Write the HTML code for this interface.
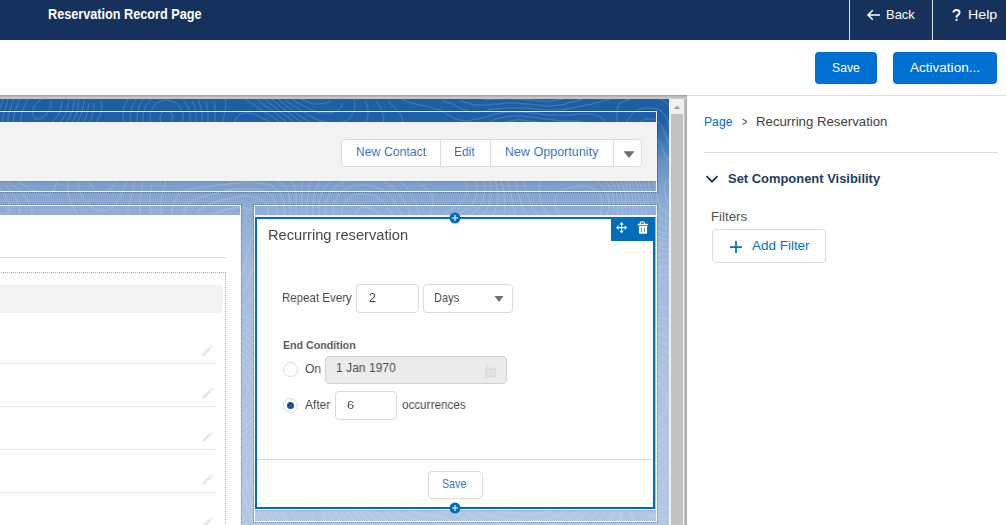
<!DOCTYPE html>
<html><head><meta charset="utf-8">
<style>
*{box-sizing:border-box;margin:0;padding:0}
html,body{width:1006px;height:525px;overflow:hidden;background:#fff;font-family:"Liberation Sans",sans-serif;color:#3e3e3c}
.a{position:absolute;white-space:nowrap}
.t{position:absolute;white-space:nowrap;line-height:1;transform-origin:0 0}
.g{will-change:transform}
#hdr{left:0;top:0;width:1006px;height:40px;background:#16325c}
.sep{position:absolute;top:0;width:1px;height:40px;background:#d8dde6}
#canvas{left:0;top:95px;width:687px;height:430px;overflow:hidden;background:#bdbdbd}
#bg{left:0;top:4px;width:669px;height:426px;background:linear-gradient(to bottom,#1d5ea4 0px,#1f60a6 22px,#3a73b4 40px,#6590c4 62px,#7d9fcc 85px,#90add5 110px,#a3bbdc 170px,#adc3e0 280px,#b2c7e3 426px)}
.dot{position:absolute;border:1px dotted rgba(22,45,85,.4)}
.wl{position:absolute;border:1px solid rgba(255,255,255,.88)}
.btn{position:absolute;background:#0070d2;border-radius:4px;color:#fff;font-size:13px;text-align:center}
</style></head><body>
<!-- header -->
<div id="hdr" class="a">
  <div class="sep" style="left:849px"></div>
  <div class="sep" style="left:932px"></div>
  <svg class="a" style="left:951px;top:9px" width="11" height="12" viewBox="0 0 11 12"><path d="M2.3 3.6C2.3 2 3.6 1 5.4 1 7.3 1 8.6 2.1 8.6 3.6c0 1.3-.8 1.9-1.7 2.5-.9.6-1.4 1-1.4 2.1v.4" stroke="#fff" stroke-width="1.9" fill="none"/><circle cx="5.5" cy="10.9" r="1.1" fill="#fff"/></svg>
  <svg class="a" style="left:865px;top:8px" width="16" height="14" viewBox="0 0 16 14"><path d="M15 7H3M7.8 2.2L3 7l4.8 4.8" stroke="#fff" stroke-width="1.5" fill="none"/></svg>
</div>
<!-- toolbar -->
<div class="btn" style="left:815px;top:52px;width:62px;height:32px;line-height:32px"></div>
<div class="btn" style="left:893px;top:52px;width:104px;height:32px;line-height:32px;font-size:13.5px"></div>
<div class="a" style="left:687px;top:95px;width:319px;height:1px;background:#dddbda"></div>

<!-- canvas -->
<div class="a" style="left:0;top:95px;width:687px;height:430px;background:#bdbdbd"></div>
<div class="a" style="left:684px;top:95px;width:3px;height:430px;background:linear-gradient(to right,#c6c6c6,#b4b4b4 50%,#a6a6a6)"></div>
<div class="a" style="left:0;top:95px;width:687px;height:4px;background:linear-gradient(#9c9c9c,#b9b9b9 40%,#cdcdcd)"></div>
<div class="a" style="left:669px;top:99px;width:15px;height:426px;background:#f1f1f1"></div>
<div class="a" style="left:671px;top:114px;width:12px;height:411px;background:#c1c1c1"></div>
<svg class="a" style="left:671px;top:103px" width="12" height="8" viewBox="0 0 12 8"><path d="M2.6 6h6.8L6 2.6z" fill="#a3a3a3"/></svg>
<div id="cv" class="a" style="left:0;top:0;width:669px;height:525px;overflow:hidden">
  <div id="bg" class="a" style="top:99px"></div>
  <!--CONTOUR--><svg class="a" style="left:0;top:99px" width="700" height="440" viewBox="0 0 700 440"><path fill="none" stroke="rgba(255,255,255,.27)" stroke-width="0.75" d="M41 0 38 3 35 6 33 10 33 16 35 20 40 20 44 18 46 16 49 12 51 8 51 2 M586 128 590 127 594 124 596 122 599 118 601 114 602 110 602 104 602 100 600 96 597 92 594 90 590 88 584 87 578 87 572 88 568 89 564 90 560 93 557 96 555 100 555 106 556 110 558 114 562 118 564 120 568 124 572 126 576 127 580 128 586 128 M60 342 63 340 65 336 64 331 62 328 58 326 52 324 46 326 43 328 41 332 42 337 45 340 48 342 54 343 60 342 M28 0 26 4 24 8 22 13 21 18 21 24 22 29 25 32 28 34 34 34 38 33 42 31 46 29 49 26 52 23 55 20 58 16 60 12 61 8 62 2 M588 136 593 134 597 132 600 129 602 126 605 122 606 118 608 113 609 108 609 102 608 98 606 93 604 89 601 86 598 83 594 81 590 80 584 78 578 78 574 78 568 78 564 78 558 78 554 78 548 78 544 79 540 82 539 86 539 92 540 98 541 102 542 106 544 110 547 114 550 118 552 120 556 124 559 126 562 128 566 131 570 133 574 135 579 136 584 136 588 136 M58 352 62 351 66 349 69 346 72 342 74 338 74 332 72 328 69 324 66 322 62 319 58 318 52 317 46 317 42 318 37 320 34 323 32 326 30 332 31 338 33 342 36 345 40 348 44 350 48 351 52 352 58 352 M311 424 313 420 313 414 311 410 308 407 306 404 302 401 298 399 292 400 290 404 290 408 291 412 293 416 296 420 299 422 302 424 308 425 M62 438 60 432 58 428 56 426 52 424 46 424 42 426 39 428 36 430 32 434 30 437 M20 0 18 4 17 8 15 12 14 17 13 22 13 28 14 32 16 36 20 40 24 42 28 43 34 42 38 41 42 39 46 37 50 34 52 32 56 28 58 26 61 22 64 18 66 14 67 10 68 6 69 0 M587 144 592 143 596 142 600 139 603 136 606 132 608 128 610 124 611 120 613 116 614 110 614 104 613 98 612 93 610 89 608 85 605 82 602 79 598 76 594 74 590 73 586 71 580 70 576 70 570 69 566 68 560 66 556 65 552 63 548 61 544 59 540 57 536 55 532 54 526 54 522 56 520 59 519 64 520 70 521 74 522 78 524 84 525 88 526 92 528 97 530 102 531 106 533 110 536 114 538 117 541 120 544 123 548 126 550 128 554 131 558 133 562 136 566 138 570 140 574 142 578 143 584 144 587 144 M221 186 224 184 228 180 230 178 232 173 234 168 235 164 235 158 236 152 236 148 236 142 236 138 234 133 230 130 226 130 222 131 218 134 216 136 212 140 210 144 208 148 206 152 205 156 203 160 202 165 201 170 202 176 203 180 206 184 210 186 214 187 220 186 M482 172 482 168 478 165 475 168 476 172 482 172 M28 214 30 211 30 208 26 204 22 203 16 202 12 204 12 209 14 212 18 215 24 215 M316 232 318 229 318 226 314 223 308 224 305 226 306 232 310 233 316 232 M63 358 67 356 70 354 74 350 76 347 78 344 80 338 80 332 78 327 76 323 73 320 70 318 66 316 62 314 56 312 52 312 46 311 41 312 36 313 32 315 29 318 26 322 24 326 23 330 23 336 24 341 26 345 28 348 32 352 36 354 39 356 44 358 48 359 54 360 60 359 M316 436 321 434 324 430 325 426 325 420 323 416 321 412 319 408 316 404 314 401 311 398 308 395 305 392 302 390 298 387 294 385 290 383 284 383 281 386 280 390 279 396 279 402 280 406 282 412 284 416 286 420 288 423 291 426 294 429 298 431 302 434 306 435 310 436 316 436 M69 438 68 432 67 428 65 424 63 420 60 417 56 414 52 413 47 414 42 416 39 418 36 420 32 424 30 426 27 430 24 434 22 437 M14 0 12 4 11 8 10 12 8 18 8 22 7 28 8 32 10 38 12 42 14 44 18 47 22 49 28 50 34 49 38 48 42 46 46 43 50 41 53 38 56 35 60 32 62 29 65 26 67 22 70 18 71 14 73 10 74 4 74 0 M301 0 306 2 310 4 314 5 320 5 326 4 330 2 M169 26 172 22 173 18 171 14 168 12 164 12 160 16 160 20 161 24 164 26 169 26 M593 152 598 151 602 148 604 146 607 142 609 138 611 134 613 130 615 126 616 121 617 116 618 111 618 106 618 100 617 96 616 91 614 86 612 83 610 80 606 76 604 74 600 71 596 68 592 67 588 65 584 64 578 62 574 61 570 60 564 58 560 56 556 55 552 53 548 51 544 49 540 47 536 45 531 44 526 43 520 44 516 45 513 48 510 52 509 56 509 62 510 66 512 72 513 76 514 80 516 86 517 90 518 94 520 100 521 104 522 108 524 112 527 116 530 120 532 122 536 126 539 128 542 130 546 132 550 135 554 137 558 140 562 142 565 144 569 146 573 148 578 150 582 151 586 152 592 152 M223 196 228 194 231 192 234 189 236 186 239 182 241 178 242 174 244 168 245 164 246 160 248 154 249 150 250 145 252 140 253 136 254 132 256 126 256 122 256 118 254 113 250 110 246 109 240 108 234 109 228 110 224 111 220 113 216 114 212 117 208 120 206 122 204 126 202 130 200 135 198 140 197 144 196 149 195 154 194 158 192 164 192 168 191 174 192 180 193 184 195 188 198 191 202 194 206 195 210 197 216 197 222 196 M489 190 492 188 494 184 496 179 496 174 496 168 496 164 494 159 492 155 489 152 484 150 480 150 476 150 472 152 468 155 466 158 464 162 463 168 464 174 465 178 467 182 470 185 474 188 478 190 482 191 488 190 M698 180 692 178 688 177 682 176 678 176 672 176 666 176 662 176 656 177 650 177 646 178 640 180 636 181 633 184 631 188 632 194 634 198 636 200 640 203 644 205 648 206 654 208 658 208 664 209 670 210 674 210 680 212 684 214 688 216 691 218 694 220 698 223 M0 224 4 227 8 229 12 230 18 231 24 231 28 230 32 228 36 226 40 223 43 220 46 216 47 212 48 206 46 201 44 198 40 195 36 192 32 190 28 189 24 187 20 186 14 184 10 183 6 182 0 180 M317 248 322 247 326 245 330 242 332 240 335 236 337 232 337 226 336 222 334 218 330 215 326 212 322 211 318 210 312 209 307 210 302 211 298 213 294 216 292 218 289 222 287 226 288 232 289 236 292 240 294 242 298 245 302 247 307 248 312 248 317 248 M507 272 509 268 509 262 508 258 505 254 500 252 498 252 494 255 492 258 491 264 493 268 496 271 500 273 506 273 M62 366 66 364 70 361 74 358 76 356 79 352 81 348 83 344 84 340 85 334 84 328 82 324 80 321 77 318 74 315 70 313 66 311 62 309 57 308 52 307 46 307 40 307 34 308 30 310 27 312 24 314 21 318 19 322 18 326 16 332 16 336 16 340 18 346 20 350 22 353 25 356 28 358 32 361 36 363 40 365 44 366 50 368 56 368 62 366 M333 438 334 434 334 428 334 424 332 419 330 415 328 411 326 408 323 404 320 400 318 397 315 394 312 391 309 388 306 385 303 382 300 379 297 376 294 373 290 370 286 368 282 368 278 369 274 372 272 376 271 380 271 386 271 392 272 398 272 402 274 408 275 412 277 416 279 420 282 424 284 427 287 430 290 433 294 436 298 438 M74 438 74 434 73 428 72 424 70 419 68 415 66 412 63 408 60 406 56 404 50 403 46 405 42 407 38 409 35 412 32 414 29 418 26 421 24 424 21 428 18 432 16 436 M8 0 7 4 6 8 4 14 3 18 2 24 3 30 4 36 5 40 7 44 10 48 12 50 16 53 20 54 26 56 32 56 38 54 42 52 46 50 49 48 52 45 56 42 58 40 62 36 64 34 68 30 70 27 72 24 74 20 76 16 78 10 78 6 79 0 M170 38 174 36 178 32 180 29 182 25 183 20 183 14 181 10 178 6 176 4 172 2 166 1 161 2 157 4 154 7 152 10 150 15 150 20 150 24 152 29 154 32 158 36 162 38 166 39 170 38 M292 0 295 2 298 4 302 6 306 8 310 10 315 12 320 14 324 14 330 14 334 13 338 11 341 8 343 4 M610 164 611 160 612 155 613 150 614 146 616 140 617 136 618 132 620 126 621 122 622 116 622 112 622 106 622 101 621 96 620 90 618 86 616 82 614 78 612 75 609 72 606 69 602 66 599 64 596 62 592 60 588 58 583 56 578 54 574 53 570 52 566 50 561 48 556 46 552 44 548 43 544 41 540 40 535 38 530 37 524 36 518 37 513 38 509 40 506 43 504 46 502 52 502 56 502 60 503 66 504 70 506 76 507 80 508 84 510 90 511 94 512 100 513 104 514 110 515 114 516 118 518 122 522 126 524 128 528 130 532 132 536 134 540 136 544 138 548 141 552 143 556 145 560 147 564 150 568 152 572 154 575 156 579 158 584 160 588 162 592 163 596 164 602 166 608 166 M223 204 228 203 232 201 236 199 240 196 242 194 245 190 247 186 248 182 250 177 252 172 253 168 254 164 256 158 257 154 259 150 260 146 262 142 264 137 266 132 267 128 268 124 269 118 268 112 267 108 265 104 262 101 258 99 254 98 248 97 242 97 237 98 232 99 227 100 222 101 218 102 213 104 208 106 204 108 201 110 198 113 195 116 193 120 192 124 191 130 190 134 189 140 188 146 187 150 186 156 185 160 184 166 184 170 183 176 184 182 185 186 186 190 189 194 192 196 196 199 200 201 204 203 210 204 214 204 220 204 M500 204 502 202 504 197 505 192 505 186 505 180 505 174 505 168 504 163 503 158 502 152 500 148 498 144 495 142 490 140 484 140 478 141 474 143 470 144 466 147 463 150 460 154 458 158 457 162 457 168 457 174 458 178 460 183 462 187 464 190 468 194 470 196 474 199 478 201 482 203 486 204 492 205 498 205 M698 170 694 169 688 168 684 168 678 167 672 167 666 167 660 168 654 168 650 168 644 168 638 169 632 169 626 169 620 169 614 169 612 172 612 178 612 182 614 187 616 191 618 194 620 198 624 202 626 204 630 207 634 210 637 212 641 214 646 216 650 217 655 218 660 219 666 220 670 221 674 222 678 224 683 226 686 228 690 231 694 233 698 236 M0 237 4 239 8 240 14 241 20 240 24 240 29 238 33 236 37 234 40 232 44 229 48 226 50 223 53 220 55 216 56 212 57 206 56 200 55 196 52 192 50 190 46 187 42 185 38 183 34 182 30 180 24 178 20 177 16 176 11 174 6 172 2 171 M324 258 328 257 332 255 336 253 340 250 342 248 346 244 348 240 349 236 349 230 348 224 346 220 344 216 342 214 338 210 335 208 332 206 327 204 322 203 318 202 312 202 306 202 302 203 297 204 293 206 289 208 286 210 282 214 280 217 278 221 277 226 278 232 279 236 281 240 284 244 286 246 290 250 293 252 297 254 301 256 306 258 310 259 316 259 322 258 M513 286 516 283 518 280 519 274 520 268 520 262 519 256 518 250 517 246 516 242 514 238 512 234 508 231 504 230 500 231 496 233 493 236 490 238 486 242 484 244 480 248 478 251 476 256 476 260 477 264 478 268 481 272 484 275 487 278 490 280 494 283 498 285 502 286 508 287 513 286 M79 438 79 432 78 427 77 422 76 418 74 414 72 409 70 406 68 402 65 398 62 394 60 391 58 388 58 382 60 379 63 376 66 374 70 370 72 368 75 364 78 361 80 358 83 354 85 350 87 346 89 342 90 336 89 330 88 326 86 322 83 318 80 315 77 312 73 310 69 308 64 306 60 305 56 304 50 303 44 302 40 302 36 302 30 304 26 305 22 308 20 310 17 314 15 318 13 322 12 326 10 332 9 336 9 342 9 348 10 352 12 356 16 360 18 362 22 365 26 367 30 369 34 372 38 374 41 376 44 379 48 382 49 386 46 390 44 392 40 396 38 398 34 401 32 404 28 408 26 410 23 414 20 418 18 421 16 425 14 428 12 432 10 436 M344 438 343 432 342 427 340 422 338 418 336 414 334 411 332 408 329 404 326 400 324 397 321 394 318 390 316 388 313 384 310 381 307 378 304 374 302 372 299 368 296 364 294 362 290 358 286 356 282 355 276 356 273 358 270 360 267 364 265 368 264 372 263 378 263 384 264 389 265 394 266 399 267 404 268 408 270 412 272 417 274 421 276 424 279 428 282 432 284 434 288 437 M3 0 2 4 0 10 M0 40 2 45 4 48 7 52 10 55 14 58 18 59 22 61 28 62 34 61 38 60 43 58 46 56 50 53 54 50 56 48 60 45 63 42 66 39 68 36 72 32 74 29 76 26 78 22 80 18 82 13 83 8 84 2 M151 0 148 4 146 7 144 11 143 16 143 22 144 27 146 32 148 35 150 38 154 42 156 44 160 46 166 48 172 47 176 45 179 42 182 39 184 36 187 32 188 28 190 22 190 16 189 10 187 6 184 2 M285 0 288 3 292 6 296 8 299 10 302 12 306 14 310 17 314 19 318 21 322 22 328 24 332 24 338 24 342 23 346 22 350 19 352 16 354 12 355 6 354 0 M698 163 692 162 688 162 682 161 676 161 670 161 664 161 658 161 652 161 646 161 640 160 636 159 632 158 628 155 625 152 624 148 623 142 623 136 624 130 624 126 625 120 626 114 626 109 626 106 626 100 625 94 624 90 622 85 620 81 618 77 616 74 613 70 610 67 607 64 604 61 600 58 597 56 594 54 590 52 586 50 582 48 577 46 572 44 568 43 564 41 560 40 554 38 550 37 546 36 541 34 536 33 532 32 526 31 520 31 514 31 510 32 506 34 502 37 499 40 497 44 495 48 495 54 496 60 497 64 498 69 499 74 500 78 502 84 503 88 504 94 504 98 505 104 505 110 504 115 503 120 500 124 498 126 494 128 489 130 484 132 480 133 476 135 472 136 468 138 464 141 461 144 458 147 456 150 454 154 452 160 452 164 452 170 452 174 454 180 455 184 456 188 458 192 461 196 464 200 466 203 469 206 472 209 475 212 478 216 480 220 480 224 479 228 477 232 474 236 472 239 469 242 466 246 464 250 463 254 463 260 465 264 467 268 470 272 472 274 476 278 479 280 482 283 486 286 490 288 493 290 497 292 502 294 506 295 510 296 515 296 520 294 523 292 525 288 526 282 526 278 526 272 526 266 526 262 526 256 525 250 525 244 525 238 525 232 524 226 524 221 523 216 522 210 521 206 519 202 518 198 516 192 515 188 514 182 513 178 513 172 512 166 512 160 512 154 514 148 516 144 518 142 524 140 530 141 535 142 540 144 544 145 548 147 552 149 556 152 560 154 563 156 566 158 570 161 574 163 578 166 581 168 584 170 588 174 591 176 594 179 597 182 600 186 602 188 605 192 608 195 610 198 614 202 616 204 620 208 623 210 626 213 630 216 634 218 638 220 642 222 646 223 650 225 655 226 660 227 664 228 669 230 674 232 678 234 681 236 685 238 688 240 692 243 696 245 M230 210 236 209 240 208 244 206 248 203 251 200 254 196 255 192 257 188 258 183 259 178 260 174 262 168 263 164 265 160 266 156 268 151 270 146 272 142 273 138 274 134 276 128 277 124 277 118 277 112 276 106 275 102 273 98 270 95 266 93 262 91 256 90 252 90 246 90 240 90 236 90 230 91 226 92 220 93 216 94 210 96 206 97 201 98 196 100 192 102 190 104 186 108 184 112 183 116 182 120 182 126 181 132 181 138 181 144 180 150 179 154 178 160 177 164 176 170 176 174 176 180 176 184 178 190 180 194 182 197 185 200 188 202 192 204 196 206 201 208 206 209 210 210 216 211 222 211 228 210 M0 247 4 248 10 250 16 250 22 248 26 247 30 245 34 243 38 241 42 238 45 236 48 234 52 230 54 228 57 224 60 220 62 216 63 212 64 208 65 202 64 196 63 192 60 188 58 186 54 182 50 180 46 178 42 176 38 175 34 174 29 172 24 170 20 169 16 168 10 166 6 165 2 164 M329 270 334 268 338 267 342 264 346 262 349 260 352 257 355 254 358 250 359 246 360 242 360 236 360 232 358 227 356 222 354 218 352 215 350 212 346 208 344 206 340 203 336 201 332 199 328 198 322 196 318 195 312 195 306 195 300 195 296 196 290 198 286 199 282 201 278 203 274 206 272 208 269 212 267 216 267 222 268 228 269 232 271 236 273 240 275 244 278 247 280 250 284 254 287 256 290 259 294 261 298 264 302 266 306 268 310 270 314 271 320 271 326 271 M84 438 83 432 83 426 82 422 80 416 79 412 77 408 76 404 74 399 72 394 71 390 71 384 72 380 74 376 76 372 79 368 82 364 84 360 86 357 88 354 90 350 92 345 93 340 94 334 93 328 92 324 90 320 87 316 84 313 80 310 77 308 74 306 69 304 64 302 60 301 56 300 50 298 46 298 40 297 34 297 28 298 24 299 20 302 18 304 14 308 12 312 10 316 8 320 7 324 5 328 4 333 3 338 2 342 0 348 M354 438 352 433 350 428 348 424 346 420 344 417 342 414 339 410 337 406 334 403 332 400 329 396 326 393 323 390 320 386 318 384 315 380 312 376 310 373 308 370 305 366 302 362 300 358 298 355 296 352 293 348 290 345 286 344 280 344 276 346 272 348 269 350 266 353 263 356 260 360 259 364 257 368 257 374 257 380 258 386 258 390 260 396 261 400 262 404 264 410 265 414 267 418 269 422 271 426 274 429 276 432 280 436 282 438 M0 366 4 370 7 372 11 374 16 376 19 378 22 380 25 384 26 388 26 392 24 396 22 400 20 404 17 408 15 412 13 416 11 420 9 424 7 428 6 432 4 437 M180 438 177 436 172 434 168 434 163 434 158 436 154 438 M0 50 3 54 6 57 9 60 12 62 16 64 21 66 26 67 32 67 38 66 42 65 46 63 50 60 52 58 56 55 59 52 62 49 65 46 68 43 71 40 74 37 76 34 79 30 82 26 84 22 86 18 87 14 88 10 89 4 M143 0 141 4 139 8 138 12 137 18 137 24 138 28 140 32 142 36 144 40 147 44 150 47 153 50 156 53 160 55 164 57 170 57 174 56 178 54 182 50 184 48 187 44 190 40 192 36 193 32 195 28 196 22 196 16 195 10 194 6 192 2 M278 0 282 3 285 6 288 8 292 11 296 14 299 16 302 18 306 21 310 24 314 26 317 28 320 30 324 32 330 34 334 34 340 34 344 34 350 32 354 31 358 29 362 27 365 24 367 20 368 16 368 10 367 6 365 2 M697 0 696 5 695 10 694 16 694 20 693 26 694 32 694 36 696 42 698 46 M698 157 692 156 688 156 682 155 676 155 670 155 664 155 658 155 652 155 647 154 642 153 638 151 634 148 632 145 630 140 629 136 629 130 629 124 630 118 630 112 630 106 629 100 628 94 627 90 626 85 624 80 622 76 620 73 618 70 615 66 612 62 610 60 606 56 603 54 600 51 596 48 593 46 590 44 586 42 582 40 577 38 572 36 568 35 563 34 558 33 554 32 548 30 544 29 538 28 534 27 528 26 524 26 518 26 514 26 508 27 504 29 500 31 496 33 493 36 491 40 489 44 488 50 489 56 490 61 491 66 492 70 494 75 495 80 496 84 497 90 498 96 498 102 496 108 495 112 493 116 490 119 486 122 483 124 479 126 475 128 471 130 467 132 464 134 460 137 457 140 454 143 452 146 450 151 448 156 448 160 447 166 448 172 448 176 449 182 450 186 452 191 454 196 456 200 458 204 460 208 462 212 463 216 464 220 464 225 462 230 460 234 458 237 455 240 452 244 450 248 449 252 449 258 450 262 453 266 456 269 459 272 462 275 466 278 469 280 472 283 476 286 479 288 482 290 486 293 490 295 494 297 498 299 502 301 506 302 512 304 516 304 521 304 526 303 529 300 531 296 532 292 532 286 532 280 532 276 532 270 531 264 531 258 531 252 531 246 532 240 532 236 533 230 533 224 534 218 533 212 532 206 531 202 529 198 528 194 526 190 524 185 522 180 521 176 521 170 521 164 522 159 524 155 528 152 532 151 538 151 542 152 546 154 550 156 554 158 558 161 562 164 565 166 568 168 572 172 575 174 578 177 581 180 584 183 588 186 590 188 594 192 596 194 600 198 603 200 606 203 609 206 612 208 616 212 619 214 622 217 626 220 630 222 633 224 637 226 641 228 645 230 650 232 654 233 658 235 662 236 667 238 672 240 676 242 679 244 682 246 686 248 690 251 694 253 698 256 M322 288 328 286 332 284 336 282 340 280 344 278 348 276 351 274 354 272 358 270 362 267 365 264 368 261 370 258 372 254 374 248 373 242 372 238 370 233 368 229 366 225 364 222 362 218 359 214 356 210 354 208 350 204 348 202 344 199 340 197 336 195 332 193 328 192 323 190 318 189 312 188 308 188 302 187 296 187 290 188 284 188 278 187 274 184 272 180 272 174 273 168 274 164 276 158 277 154 278 150 280 144 281 140 282 136 283 130 284 124 284 120 285 114 284 108 284 104 282 98 280 94 278 92 274 88 270 86 266 85 260 84 256 84 250 83 244 83 238 84 234 84 228 85 222 86 218 86 212 87 206 88 202 88 196 89 190 90 186 91 182 93 178 96 176 99 174 103 173 108 172 114 172 116 172 122 173 128 173 134 174 140 173 146 173 152 172 156 171 162 170 166 169 172 168 178 168 184 170 190 172 194 174 198 176 200 180 204 183 206 186 208 190 210 195 212 200 213 204 214 210 216 214 216 220 217 226 217 232 217 238 217 244 218 248 219 252 221 255 224 258 228 260 232 262 235 264 238 266 242 269 246 272 249 274 252 278 256 280 258 284 262 286 264 290 267 293 270 296 273 299 276 302 279 305 282 308 285 312 288 316 289 322 288 M0 257 4 258 10 259 16 259 20 258 24 256 28 254 32 251 36 249 40 246 43 244 46 242 50 239 53 236 56 233 59 230 62 226 64 223 66 219 68 215 70 210 71 206 72 200 72 194 70 188 68 184 66 181 62 178 60 176 56 174 52 172 47 170 42 169 38 167 34 166 28 164 24 163 20 162 14 160 10 159 4 158 0 157 M89 438 88 432 88 428 86 422 86 418 84 413 83 408 81 404 80 399 79 394 78 388 79 382 80 377 82 372 84 369 86 365 88 362 90 358 92 354 94 350 96 345 97 340 98 334 97 328 96 324 94 319 92 316 89 312 86 310 82 307 78 304 74 302 70 300 66 299 62 298 57 296 52 295 48 294 42 292 38 292 32 291 26 291 22 292 18 295 14 298 12 301 10 304 8 308 6 312 4 317 2 322 0 326 M363 438 361 434 359 430 356 426 354 422 352 419 350 416 347 412 344 408 342 406 339 402 336 399 334 396 330 392 328 389 325 386 322 382 320 379 318 376 315 372 312 368 310 364 308 360 306 356 304 352 303 348 302 344 300 340 298 335 296 332 290 330 284 332 280 334 276 336 273 338 270 340 266 344 264 346 260 350 258 352 255 356 253 360 252 364 251 370 251 376 251 382 252 386 253 392 255 396 256 401 257 406 259 410 260 414 262 418 264 423 266 426 269 430 272 434 274 436 M698 333 696 338 694 342 692 346 690 350 688 353 686 356 683 360 680 363 677 366 674 368 671 372 668 375 666 378 664 382 663 388 665 392 668 394 674 395 680 396 686 395 692 395 698 396 M0 397 3 400 4 404 4 410 4 414 2 420 1 424 0 429 M189 438 186 435 183 432 179 430 174 428 170 427 164 428 160 429 156 430 152 432 148 435 145 438 M0 57 2 60 6 63 10 66 13 68 17 70 22 72 26 73 32 74 38 73 42 72 46 70 50 67 54 64 56 62 60 58 62 56 66 52 68 50 72 46 74 43 77 40 80 37 82 34 85 30 88 26 90 22 92 18 93 14 94 9 94 4 M136 0 134 4 132 8 131 12 130 18 131 24 132 28 134 32 136 36 138 40 140 44 143 48 146 52 148 54 151 58 154 61 157 64 160 68 162 70 165 74 166 80 165 86 164 90 162 96 161 100 161 106 161 112 162 117 163 122 164 127 165 132 166 138 166 144 166 150 165 156 164 160 163 166 162 170 161 176 161 182 162 188 163 192 165 196 167 200 170 203 173 206 176 209 180 211 184 213 188 215 192 217 197 218 202 219 206 220 212 221 218 222 222 222 228 223 233 224 238 225 242 227 246 229 250 232 252 234 256 238 258 241 261 244 264 248 266 250 269 254 272 257 275 260 278 264 280 266 284 270 286 273 288 276 291 280 293 284 294 288 295 294 295 300 294 304 292 308 290 312 287 316 284 319 281 322 278 325 275 328 272 331 268 334 266 336 262 340 260 342 256 346 254 348 251 352 249 356 247 360 246 364 245 370 245 376 246 382 247 386 248 392 249 396 250 400 252 405 254 410 255 414 256 418 258 422 260 426 263 430 266 434 268 436 M373 438 370 434 368 431 366 428 363 424 360 420 358 418 355 414 352 411 350 408 346 404 344 402 341 398 338 395 336 392 332 388 330 386 327 382 324 378 322 375 320 372 317 368 315 364 314 360 312 356 310 350 309 346 309 340 308 334 309 328 310 323 312 318 314 314 316 311 319 308 322 305 326 302 328 300 332 297 336 295 340 292 344 290 347 288 351 286 355 284 359 282 362 280 366 278 370 276 374 273 378 271 382 268 384 266 388 262 390 260 392 254 390 248 388 244 386 241 384 238 381 234 378 230 376 227 374 224 371 220 368 216 366 214 363 210 360 207 358 204 354 201 351 198 348 196 344 193 340 191 336 189 332 187 328 186 323 184 318 183 314 181 308 180 304 179 300 178 296 176 292 174 289 170 287 166 287 160 287 154 288 148 288 144 289 138 290 132 290 128 290 122 291 116 291 110 290 104 290 100 288 94 287 90 284 86 281 84 278 82 272 80 268 79 262 78 258 78 252 78 246 78 240 78 234 78 230 78 224 78 218 79 212 79 206 79 201 78 196 77 192 76 188 74 185 70 186 64 187 60 189 56 191 52 193 48 195 44 197 40 198 36 200 31 201 26 202 20 202 14 201 8 199 4 198 0 M272 0 274 2 278 5 281 8 284 10 288 13 292 16 294 18 298 21 302 24 304 26 308 30 311 32 314 35 318 38 322 40 326 42 330 43 336 43 342 43 347 42 352 41 357 40 362 39 366 37 370 35 374 33 378 30 380 28 383 24 384 18 382 12 380 8 378 5 376 2 M691 0 691 6 690 10 689 16 689 22 689 28 690 34 691 38 692 43 694 48 696 52 698 55 M698 152 692 151 686 151 680 150 674 150 668 150 664 150 658 149 652 148 648 147 644 146 640 143 638 140 636 136 634 130 634 126 634 120 633 114 633 108 633 102 632 96 631 92 630 87 628 82 627 78 625 74 622 70 620 66 618 63 615 60 612 56 610 53 607 50 604 47 601 44 598 41 595 38 592 36 588 34 584 32 578 30 574 29 568 28 564 28 558 27 552 26 548 25 542 24 538 23 532 22 528 22 522 21 516 21 510 22 506 23 501 24 496 26 493 28 490 30 486 34 484 36 482 40 481 46 481 52 482 56 484 62 485 66 486 70 488 75 489 80 490 84 491 90 491 96 490 102 489 106 487 110 484 114 482 116 478 119 474 121 470 124 466 126 463 128 460 130 456 133 453 136 450 140 448 143 446 148 445 152 444 156 443 162 443 168 444 174 444 178 445 184 446 188 448 194 449 198 450 202 452 208 452 212 453 218 452 223 450 227 448 231 445 234 442 238 440 240 436 244 434 246 431 250 430 254 430 258 433 262 436 265 439 268 442 270 446 272 450 275 454 278 458 280 461 282 464 284 468 287 472 290 476 292 478 294 482 296 486 299 490 301 494 303 498 305 502 307 506 308 512 310 516 311 522 312 528 312 534 310 536 308 538 304 539 298 539 292 538 286 538 282 537 276 536 270 536 266 536 260 536 254 536 250 537 244 538 238 539 234 540 228 541 224 542 218 543 214 543 208 542 202 541 198 539 194 538 190 536 186 534 182 532 176 532 172 533 168 536 164 540 163 546 164 550 166 553 168 556 170 560 174 563 176 566 179 569 182 572 185 576 188 578 190 582 193 586 195 590 198 592 200 596 203 600 206 603 208 606 210 610 214 613 216 616 218 620 221 624 224 627 226 630 228 634 231 638 233 642 235 646 237 650 239 654 240 658 242 663 244 667 246 671 248 675 250 678 252 682 255 686 257 690 260 693 262 696 264 M94 438 94 434 93 428 92 424 90 418 89 414 88 410 86 404 85 400 84 394 84 390 84 384 85 380 86 376 88 371 90 367 92 363 94 359 96 355 98 351 100 346 101 342 102 336 102 330 100 324 99 320 97 316 94 312 92 310 88 306 85 304 82 302 78 300 74 298 69 296 64 294 60 293 56 291 51 290 46 288 42 287 38 285 34 284 30 282 26 280 22 276 22 273 24 270 27 266 30 262 32 260 36 257 39 254 42 251 46 248 49 246 52 243 56 240 58 238 61 234 64 231 66 228 69 224 71 220 73 216 75 212 76 208 78 202 79 198 79 192 78 186 77 182 75 178 72 174 70 172 66 169 62 167 58 165 54 164 49 162 44 161 40 160 34 158 30 157 24 156 20 155 14 154 10 153 4 152 0 152 M0 267 4 270 8 272 11 274 14 278 14 280 12 285 10 289 8 293 6 298 4 302 3 306 1 310 M698 318 696 323 694 328 692 332 690 336 688 340 686 343 684 346 680 350 678 352 674 356 672 358 668 361 665 364 662 367 659 370 656 374 654 377 652 381 650 386 649 390 649 396 650 400 653 404 656 406 660 408 666 409 672 410 676 410 682 411 686 413 689 416 691 420 692 425 692 430 692 434 M196 438 194 435 192 432 188 429 184 426 181 424 176 422 172 422 166 421 162 422 156 424 152 426 149 428 146 430 142 433 139 436 M0 63 3 66 6 69 10 72 14 74 18 76 22 78 26 80 30 81 36 82 42 81 46 80 50 77 53 74 56 71 58 68 62 64 64 61 67 58 70 55 72 52 76 48 78 46 82 42 84 39 87 36 90 32 92 30 95 26 97 22 99 18 101 14 102 8 101 2 M128 0 126 4 124 8 123 12 123 18 124 24 125 28 127 32 129 36 132 40 134 44 136 47 138 50 141 54 143 58 145 62 148 66 149 70 151 74 152 80 152 86 151 92 150 98 150 104 150 110 152 116 153 120 154 125 156 130 157 134 158 140 158 146 158 152 157 158 156 162 155 168 154 172 153 178 153 184 154 189 156 194 158 198 160 201 162 204 166 208 168 210 172 213 176 215 180 217 184 219 188 220 193 222 198 223 202 224 208 225 213 226 218 227 224 228 228 229 232 230 237 232 241 234 244 236 248 239 251 242 254 245 257 248 260 251 263 254 266 258 268 260 271 264 274 267 276 270 279 274 282 278 283 282 285 286 286 292 285 298 284 303 282 308 280 312 278 315 276 318 272 322 270 324 266 328 264 330 260 334 258 336 254 340 252 342 249 346 246 350 244 353 242 357 240 362 239 366 239 372 239 378 240 382 241 388 242 392 244 397 245 402 247 406 248 410 250 416 251 420 253 424 255 428 258 432 260 435 263 438 M698 146 694 146 688 146 682 146 676 145 670 145 664 145 659 144 654 143 650 141 646 139 643 136 641 132 639 128 638 122 638 118 637 112 637 106 636 100 636 96 634 90 633 86 632 82 630 77 628 72 626 69 624 65 622 62 619 58 616 54 614 51 612 48 609 44 606 40 604 37 602 34 598 30 596 28 592 26 588 24 582 23 576 22 570 22 566 22 560 22 554 21 548 20 544 20 538 19 532 18 528 18 522 17 516 17 510 17 505 18 500 19 496 20 492 22 487 24 483 26 480 28 476 31 473 34 471 38 470 44 472 50 473 54 475 58 476 62 478 66 480 70 482 76 483 80 484 84 485 90 484 96 483 100 482 104 479 108 476 112 473 114 470 116 466 119 462 122 458 124 455 126 452 129 449 132 446 136 444 139 442 144 441 148 440 154 440 158 439 164 440 170 440 174 441 180 442 186 442 190 443 196 444 201 444 206 444 212 444 216 442 221 440 225 437 228 434 231 430 234 427 236 423 238 418 240 414 240 408 240 404 239 400 237 396 235 392 233 389 230 386 228 382 224 380 221 377 218 374 215 372 212 368 208 366 206 362 202 360 200 356 196 353 194 350 192 346 189 342 187 338 185 334 183 330 181 326 179 322 177 318 176 314 174 310 172 306 169 302 166 300 163 298 158 297 154 297 148 296 142 296 136 296 130 296 124 296 118 296 112 296 106 296 100 296 96 295 90 294 86 291 82 288 78 284 76 280 75 274 74 270 73 264 73 258 73 252 72 247 72 242 72 236 72 230 71 224 71 218 70 214 70 208 68 205 66 202 62 201 58 201 52 202 48 204 42 205 38 206 34 207 28 208 23 208 18 208 12 207 8 206 3 M265 0 268 3 272 6 274 8 278 11 282 14 285 16 288 18 292 22 294 24 298 28 300 30 304 34 306 37 308 40 312 44 314 46 318 48 322 50 328 51 334 51 340 50 344 50 350 49 355 48 360 47 365 46 370 45 374 44 380 42 384 41 388 39 392 37 396 34 398 32 402 28 403 24 402 18 400 14 398 12 394 8 392 6 388 2 M684 0 685 6 685 12 685 18 685 24 685 30 686 36 687 40 688 44 690 49 692 53 694 56 697 60 M101 438 100 434 98 428 97 424 96 420 94 414 93 410 92 406 90 400 89 396 89 390 89 384 90 379 92 374 93 370 95 366 97 362 99 358 101 354 103 350 104 346 105 340 106 334 106 328 104 322 102 318 100 314 98 311 95 308 92 305 88 302 85 300 82 298 78 296 74 294 69 292 64 290 60 288 56 287 52 285 48 283 44 280 41 278 38 274 38 270 39 266 41 262 44 258 46 256 50 252 52 250 56 246 58 244 62 240 64 238 67 234 70 230 72 228 74 224 76 220 79 216 80 212 82 208 84 202 85 198 86 194 87 188 87 182 86 178 84 173 82 170 79 166 76 163 72 160 69 158 64 156 60 154 56 153 50 152 46 151 40 151 34 150 30 149 24 149 18 148 14 148 8 147 2 146 M384 438 382 436 378 432 376 429 373 426 370 423 367 420 364 417 362 414 358 410 356 408 352 404 350 402 346 398 344 396 341 392 338 389 335 386 332 382 330 379 327 376 325 372 322 368 320 364 319 360 317 356 316 351 315 346 315 340 316 334 317 330 318 326 320 322 323 318 326 314 328 312 332 308 334 306 338 303 342 301 346 298 350 296 354 294 358 292 362 290 366 288 370 287 374 285 378 283 382 281 386 280 390 278 395 276 400 274 404 273 409 272 414 272 418 272 424 273 428 274 433 276 438 278 442 279 446 281 450 283 454 285 458 287 462 290 466 292 469 294 472 296 476 299 480 301 484 304 488 306 492 308 496 310 500 311 504 313 508 314 514 316 518 317 522 318 528 319 534 319 540 318 544 316 546 313 547 308 547 302 546 298 545 292 544 288 542 282 542 278 541 272 540 266 540 260 540 254 541 248 542 243 543 238 544 234 546 229 548 224 549 220 551 216 552 212 554 208 556 203 558 200 562 198 568 198 572 199 576 200 581 202 586 204 589 206 593 208 596 210 600 212 604 215 608 218 611 220 614 222 618 225 621 228 624 230 628 233 632 235 636 238 639 240 643 242 647 244 651 246 655 248 660 250 664 252 668 254 671 256 674 258 678 260 682 263 686 266 688 268 692 272 694 274 697 278 M698 302 697 306 695 310 694 314 692 319 690 324 688 328 686 332 684 335 682 338 678 342 676 344 672 348 670 350 666 353 663 356 660 359 656 362 654 365 651 368 648 372 646 376 644 380 642 384 641 388 640 394 640 398 640 404 641 408 643 412 646 415 650 417 654 418 660 420 664 420 670 421 674 422 678 425 681 428 683 432 684 436 M204 438 201 434 198 430 196 428 192 424 189 422 186 420 182 418 176 416 172 415 166 415 162 416 156 418 152 420 148 422 145 424 142 426 138 429 135 432 132 435 130 438 M257 0 260 3 264 6 267 8 270 10 274 13 278 16 280 18 284 21 287 24 290 27 293 30 296 34 298 38 300 41 302 46 304 50 305 54 308 58 312 60 316 60 321 60 326 59 332 59 336 58 342 57 347 56 352 55 358 54 362 54 368 53 373 52 378 51 384 50 388 50 394 49 398 48 404 47 410 46 416 46 422 46 428 47 434 48 438 48 444 49 448 50 454 52 457 54 460 56 464 60 466 62 469 66 471 70 473 74 475 78 476 82 477 88 477 94 476 98 474 102 471 106 468 109 464 112 461 114 458 116 454 119 450 122 448 124 444 128 442 131 440 135 438 140 437 144 436 150 436 154 436 160 436 166 436 171 436 176 437 182 438 188 438 193 438 198 438 204 438 208 436 214 434 218 432 221 428 224 425 226 421 228 416 229 410 230 404 229 400 227 396 226 392 223 388 220 385 218 382 215 379 212 376 209 373 206 370 203 367 200 364 197 360 194 358 192 354 189 350 186 346 184 343 182 340 180 336 178 332 176 328 174 324 171 320 169 316 166 313 164 310 160 308 157 306 152 305 148 304 144 303 138 303 132 302 126 302 121 302 116 302 110 302 104 302 98 302 92 302 86 302 80 301 74 298 70 294 68 290 68 284 68 278 68 272 68 266 68 260 67 254 67 248 66 243 66 238 65 232 64 228 64 223 62 219 60 216 58 213 54 212 49 212 44 212 40 213 34 214 29 215 24 215 18 215 12 215 6 214 2 M698 141 692 141 686 141 680 141 674 141 668 140 664 140 658 138 654 137 650 134 648 132 645 128 644 124 642 118 642 114 641 108 640 102 639 98 638 92 638 88 636 82 634 78 633 74 631 70 629 66 627 62 624 58 622 54 620 51 618 48 616 44 614 40 612 36 610 32 608 28 606 24 603 20 600 18 596 16 590 15 584 15 578 15 572 16 566 16 562 16 556 16 551 16 546 16 540 15 534 14 530 14 524 13 518 13 512 13 506 13 501 14 496 15 492 16 486 18 482 19 478 20 472 21 466 22 460 21 456 20 452 18 448 16 444 13 440 11 436 10 430 8 426 7 420 6 416 5 411 4 406 2 402 0 M676 0 677 4 678 8 679 14 680 20 680 24 681 30 682 36 683 40 684 45 686 50 688 54 690 58 692 60 695 64 698 67 M0 69 3 72 6 74 10 77 14 80 17 82 20 84 24 86 28 89 32 91 36 93 40 95 44 97 50 96 52 94 54 90 56 86 58 82 60 78 63 74 65 70 68 66 70 63 72 60 76 56 78 53 81 50 84 47 87 44 90 41 93 38 96 35 100 32 102 30 106 28 112 27 116 30 118 32 122 36 124 39 126 42 129 46 131 50 134 54 136 58 138 62 140 66 141 70 142 74 143 80 142 86 142 90 141 96 140 102 140 106 140 112 140 116 142 121 144 126 145 130 146 134 148 140 149 144 149 150 148 156 147 160 146 165 145 170 144 176 144 180 144 184 146 190 148 194 150 198 152 201 154 204 158 208 160 210 164 214 167 216 170 218 174 220 178 222 183 224 188 226 192 227 198 228 202 229 208 230 212 231 218 232 222 233 227 234 232 236 236 238 240 240 243 242 246 244 250 248 252 250 256 254 258 256 262 260 264 263 267 266 270 270 272 273 274 276 276 281 278 286 278 290 278 296 278 300 276 305 274 309 272 313 270 316 267 320 264 323 261 326 258 329 255 332 252 335 249 338 246 341 243 344 240 348 238 351 236 355 234 360 233 364 232 370 233 376 234 382 235 386 236 391 237 396 239 400 240 405 241 410 242 414 244 419 246 424 248 428 250 432 252 435 255 438 M212 438 210 434 208 431 206 428 202 424 200 422 196 419 193 416 189 414 186 412 180 410 176 409 170 409 164 409 160 410 156 412 151 414 148 416 144 418 140 421 136 424 133 426 130 428 126 431 122 434 118 436 114 436 110 434 108 431 106 428 104 424 102 420 100 415 98 410 97 406 96 402 94 396 94 392 94 386 94 382 96 376 97 372 99 368 101 364 103 360 104 356 106 352 108 347 109 342 110 338 110 332 110 328 108 322 107 318 105 314 102 310 100 307 97 304 94 302 90 298 86 296 83 294 79 292 75 290 70 288 66 286 62 284 58 282 55 280 52 278 49 274 48 270 48 266 50 261 52 258 55 254 58 251 61 248 64 245 66 242 70 238 72 235 74 232 77 228 79 224 82 220 84 216 86 212 88 208 90 204 91 200 93 196 94 192 96 186 97 182 97 176 96 172 94 167 92 163 90 160 87 156 84 153 81 150 78 147 74 144 72 142 68 139 64 136 60 135 56 134 52 134 46 136 42 137 38 138 32 140 28 140 22 141 16 141 10 141 4 141 M398 438 394 435 390 433 387 430 384 428 380 424 378 422 374 419 371 416 368 413 365 410 362 407 359 404 356 402 352 398 350 396 346 392 344 390 340 386 338 383 335 380 332 376 330 373 328 369 326 366 324 361 322 356 321 352 321 346 321 340 322 335 324 330 326 326 328 322 330 320 333 316 336 313 340 310 343 308 346 306 350 304 354 302 358 300 363 298 368 296 372 295 376 293 380 292 386 290 390 289 394 287 399 286 404 285 408 284 414 283 420 283 426 283 430 284 436 285 440 286 445 288 450 290 454 292 458 294 462 296 465 298 468 300 472 302 476 305 480 307 484 310 488 312 492 313 496 315 500 317 504 318 510 320 514 321 518 322 524 324 528 325 534 326 538 326 544 326 548 325 552 323 554 320 556 314 555 308 554 304 552 298 551 294 549 290 548 285 547 280 546 276 545 270 544 264 544 258 545 252 546 247 547 242 548 238 550 234 552 229 554 225 556 222 559 218 562 214 565 212 570 210 574 209 580 210 584 211 588 212 592 214 596 216 600 218 604 221 608 224 611 226 614 228 618 231 622 234 625 236 628 239 632 242 636 244 639 246 642 248 646 251 650 253 654 255 658 257 662 259 666 261 670 263 674 266 677 268 680 271 684 274 686 277 688 280 690 284 692 289 692 294 692 300 691 304 690 309 688 314 687 318 685 322 683 326 680 330 678 333 675 336 672 339 669 342 666 345 662 348 660 350 656 354 653 356 650 359 648 362 645 366 642 370 640 374 638 378 636 382 635 386 634 390 632 396 632 400 631 406 631 412 632 417 634 422 636 424 640 426 646 428 650 429 656 429 661 430 666 431 670 433 673 436 M245 0 248 2 252 5 256 7 260 10 263 12 266 14 270 16 274 19 278 22 280 24 284 28 286 31 288 34 290 38 292 44 292 48 291 52 288 56 285 58 280 60 276 61 270 62 264 62 258 62 252 61 246 60 242 59 237 58 232 56 229 54 226 52 223 48 222 44 221 38 222 32 222 28 223 22 224 18 225 12 226 6 225 0 M610 0 606 1 602 2 596 4 592 5 586 6 582 7 578 8 572 9 568 10 562 11 556 11 550 11 544 11 538 10 534 10 528 9 522 9 516 9 510 9 504 9 498 10 494 10 488 11 484 12 478 13 472 13 468 12 462 10 458 8 454 6 450 4 446 3 442 1 M698 135 692 136 686 136 680 136 674 136 668 135 663 134 658 132 655 130 652 127 650 124 648 120 646 114 645 110 644 104 644 100 643 94 642 90 640 84 639 80 638 76 636 72 634 67 632 63 630 59 628 56 626 52 624 48 622 44 620 39 618 34 618 30 617 24 617 18 617 12 618 8 620 4 624 2 630 0 M659 0 664 2 667 4 670 8 672 12 673 16 674 20 675 26 676 30 677 36 678 40 680 46 681 50 683 54 685 58 688 62 690 65 693 68 696 71 M225 438 223 434 221 430 218 427 215 424 212 421 208 418 206 416 202 413 198 410 195 408 192 406 188 404 182 402 178 401 172 401 166 402 162 403 158 404 154 406 150 408 146 410 142 413 138 415 134 417 130 420 126 422 122 423 116 423 112 421 109 418 107 414 104 410 103 406 101 402 100 397 99 392 99 386 100 380 101 376 102 372 104 367 106 363 108 358 110 354 112 350 113 346 114 341 115 336 115 330 114 326 112 320 110 316 108 312 106 309 104 306 100 302 98 300 94 296 91 294 87 292 84 290 80 288 76 286 72 284 68 282 64 279 60 276 58 273 56 268 58 262 60 258 62 255 64 252 67 248 70 245 72 242 75 238 78 234 80 231 82 228 85 224 87 220 89 216 92 212 94 208 96 204 98 201 100 198 103 194 105 190 108 186 110 182 112 178 112 174 112 170 110 165 108 161 106 157 104 154 101 150 98 146 96 142 94 140 91 136 89 132 86 128 84 125 82 122 79 118 77 114 74 110 72 106 71 102 69 98 68 92 68 88 68 84 69 78 71 74 73 70 75 66 78 62 80 59 83 56 86 53 89 50 92 47 96 44 99 42 104 40 108 39 112 40 116 42 120 45 122 48 125 52 128 56 130 60 132 64 133 68 134 72 135 78 134 84 134 88 132 94 131 98 130 102 128 108 128 112 128 118 128 122 130 128 132 132 133 136 134 140 136 146 136 152 134 158 133 162 132 166 130 172 130 176 131 180 132 184 134 188 137 192 139 196 142 199 144 202 148 206 150 209 153 212 156 214 160 218 163 220 166 222 170 224 174 226 179 228 184 230 188 231 194 232 198 233 204 234 208 234 214 236 218 237 223 238 228 240 232 242 236 244 240 246 242 248 246 251 249 254 252 257 255 260 258 263 261 266 264 270 266 273 268 277 270 281 272 286 272 290 272 296 271 300 270 304 268 309 266 312 263 316 260 320 258 322 254 326 252 328 248 332 246 334 242 337 239 340 236 343 233 346 230 350 228 354 226 358 225 362 225 368 225 374 226 380 227 384 228 390 229 394 230 398 231 404 232 408 233 414 234 419 235 424 236 429 238 433 240 436 M418 220 412 221 406 221 401 220 396 218 393 216 390 214 386 211 382 208 380 206 376 203 373 200 370 197 367 194 364 192 360 188 357 186 354 184 350 181 346 178 342 176 339 174 336 172 332 169 328 167 324 164 322 162 318 158 316 155 314 151 312 146 311 142 310 138 309 132 308 126 308 122 307 116 307 110 307 104 308 98 308 94 309 88 310 84 312 80 314 76 318 72 322 70 326 68 330 67 334 65 339 64 344 63 348 62 354 61 360 60 364 60 370 59 376 59 382 59 388 59 394 59 400 60 404 60 410 62 414 63 418 64 423 66 428 67 434 68 438 68 444 68 450 69 454 70 458 72 462 76 464 78 466 82 467 88 467 94 465 98 462 102 460 104 456 107 452 110 449 112 446 114 442 118 440 120 438 124 436 128 434 133 433 138 432 144 432 148 432 154 432 160 432 166 432 170 432 176 433 182 433 188 433 194 433 200 432 204 430 210 428 213 425 216 422 218 418 220 M0 75 3 78 6 80 10 83 13 86 16 88 20 92 22 94 25 98 28 102 30 106 32 110 32 114 32 118 30 124 28 126 24 130 20 132 16 133 10 134 6 135 0 135 M432 438 426 437 420 436 416 435 410 434 406 433 402 431 398 429 394 427 390 424 387 422 384 419 380 416 377 414 374 411 370 408 368 406 364 402 361 400 358 397 354 394 352 392 348 388 346 386 342 382 340 380 337 376 334 372 332 368 330 364 328 360 327 356 326 350 326 346 326 342 328 336 329 332 331 328 334 324 336 322 340 318 342 316 346 313 350 311 354 309 358 307 362 305 366 304 372 302 376 301 382 300 386 299 390 298 396 297 400 296 406 294 410 293 416 292 420 292 426 292 430 292 436 293 441 294 446 295 450 297 454 299 458 301 462 303 466 305 470 308 474 310 477 312 481 314 485 316 490 318 494 320 498 321 502 322 507 324 512 326 516 327 520 328 526 330 530 331 536 332 540 333 546 333 552 333 556 331 560 329 562 326 564 321 564 316 563 312 562 308 560 303 558 298 556 294 554 290 553 286 552 282 550 276 549 272 549 266 549 260 549 254 550 250 552 244 553 240 555 236 557 232 560 228 562 225 565 222 568 220 573 218 578 217 584 218 588 219 592 220 596 222 600 224 604 226 608 229 612 232 615 234 618 237 622 240 625 242 628 245 632 248 635 250 638 253 642 255 646 258 650 260 653 262 657 264 660 266 664 268 668 271 672 273 675 276 678 279 680 282 683 286 684 290 685 296 685 302 684 308 683 312 681 316 679 320 677 324 674 328 672 330 668 334 666 336 662 340 659 342 656 345 652 348 650 350 646 354 644 357 641 360 639 364 636 368 634 372 632 376 631 380 629 384 628 388 626 394 625 398 624 404 623 408 622 413 621 418 620 422 619 428 617 432 616 436 M582 0 576 2 572 3 568 4 562 6 558 6 552 7 546 7 540 6 536 6 530 5 524 5 518 4 512 4 506 4 500 5 494 5 488 6 484 6 478 6 474 6 468 4 464 3 460 1 M698 129 694 130 688 131 682 131 676 131 670 130 666 129 662 127 658 125 655 122 653 118 651 114 650 110 648 104 648 100 647 94 646 90 644 84 643 80 642 76 640 71 638 66 636 62 634 58 632 54 631 50 629 46 628 42 626 36 626 32 626 28 627 22 630 18 632 15 636 12 640 10 644 9 650 9 656 10 660 11 663 14 666 18 668 22 669 26 670 30 672 36 673 40 674 44 676 49 678 54 680 58 682 61 684 64 687 68 690 71 692 74 696 78 M272 54 266 55 260 55 254 55 250 54 244 52 240 50 238 48 234 44 232 40 232 36 232 30 233 26 235 22 237 18 240 15 244 14 248 14 254 15 258 17 262 19 266 21 270 23 273 26 276 29 279 32 281 36 282 40 282 46 280 49 277 52 272 54 M106 112 100 112 96 111 92 108 89 106 86 103 84 100 81 96 80 92 78 86 78 82 78 78 80 72 82 68 84 65 86 62 90 58 92 56 96 53 100 51 104 50 110 50 114 51 117 54 120 57 122 60 124 64 126 70 127 74 126 80 126 84 124 89 122 94 120 98 118 101 116 104 113 108 110 110 106 112 M416 212 410 214 404 213 399 212 394 210 391 208 388 206 384 203 380 200 378 198 374 195 371 192 368 189 364 186 361 184 358 181 354 178 351 176 348 174 344 171 340 168 337 166 334 164 330 160 328 158 324 154 322 151 320 147 318 142 317 138 315 134 314 128 314 124 313 118 313 112 313 106 314 100 314 96 316 90 318 86 320 83 322 80 326 77 330 74 334 72 338 71 342 70 348 68 352 67 358 66 362 66 368 66 374 66 380 66 384 66 390 67 394 68 398 70 403 72 406 74 410 77 414 80 417 82 420 85 424 88 427 90 430 93 432 96 433 102 432 108 431 112 430 116 429 122 428 128 428 132 427 138 427 144 427 150 427 156 428 162 428 166 428 172 429 178 429 184 428 190 428 194 427 200 425 204 422 208 420 210 416 212 M0 81 3 84 6 87 9 90 12 94 14 96 16 100 18 104 20 110 19 116 17 120 14 123 10 126 6 127 2 129 M128 412 122 413 117 412 114 410 110 406 108 402 106 398 105 394 104 388 105 382 106 376 107 372 109 368 110 364 112 360 114 356 116 352 118 346 119 342 120 336 120 330 119 324 117 320 116 316 113 312 111 308 108 304 106 302 102 298 100 296 96 293 92 290 89 288 86 286 82 284 78 281 74 279 70 276 68 273 66 270 65 264 66 260 68 256 71 252 74 248 76 245 78 242 81 238 84 234 86 230 88 227 90 224 93 220 95 216 98 212 100 209 103 206 106 203 109 200 112 198 118 196 122 196 126 197 130 199 134 202 136 204 140 208 143 210 146 213 149 216 152 218 156 221 160 224 163 226 166 228 170 230 175 232 180 234 184 235 190 236 194 237 200 238 204 238 210 240 214 240 220 242 224 243 228 245 232 247 236 249 240 252 242 254 246 257 249 260 252 263 254 266 258 270 260 273 262 277 264 281 266 286 266 290 266 296 266 300 264 304 262 309 260 312 257 316 254 319 251 322 248 325 245 328 242 330 238 333 234 336 231 338 228 341 224 344 222 346 218 350 216 354 215 358 214 363 214 368 214 374 214 378 215 384 215 390 215 396 212 400 210 400 204 398 200 397 196 395 192 393 188 392 182 391 176 391 170 392 166 393 162 395 158 396 154 399 150 401 146 403 142 405 138 408 134 410 130 411 M455 438 451 436 446 434 442 433 438 431 432 430 428 430 422 429 418 428 412 427 408 426 404 424 399 422 396 420 392 418 388 415 384 412 382 410 378 407 374 404 371 402 368 399 364 396 361 394 358 391 354 388 352 386 348 382 346 380 342 376 340 373 338 370 336 366 334 362 332 356 331 352 331 346 332 340 333 336 335 332 338 328 340 326 344 322 346 320 350 317 354 315 358 313 362 312 368 310 372 309 378 308 382 308 388 307 394 306 398 305 404 304 408 303 413 302 418 301 424 300 428 300 432 300 438 301 444 302 448 303 452 305 456 307 460 309 464 311 468 314 472 316 476 318 480 320 484 321 488 323 492 324 497 326 502 327 506 328 511 330 516 331 520 333 525 334 530 336 534 337 540 338 544 339 550 339 556 339 561 338 565 336 568 333 571 330 572 326 572 320 572 316 570 311 568 306 566 302 564 299 562 295 560 291 558 286 556 282 555 278 554 274 553 268 553 262 553 256 554 252 556 246 558 242 560 238 562 235 564 232 568 228 572 226 576 224 580 224 585 224 590 225 594 226 598 228 602 231 606 233 610 236 613 238 616 241 620 244 622 246 626 250 629 252 632 255 635 258 638 260 642 263 646 266 649 268 652 270 656 272 660 275 664 277 667 280 670 282 673 286 675 290 677 294 678 300 677 306 676 310 674 315 672 318 670 322 666 326 664 328 660 332 658 334 654 337 651 340 648 343 645 346 642 349 639 352 636 356 634 360 632 363 630 367 628 371 626 376 625 380 623 384 622 388 620 394 619 398 618 402 616 407 614 412 612 416 610 420 608 423 605 426 602 429 598 432 595 434 591 436 586 438 M506 0 500 0 494 0 488 1 482 0 M563 0 558 1 552 2 546 2 544 2 538 2 532 1 526 1 520 0 514 0 M698 122 692 124 688 125 682 125 676 125 670 124 666 122 662 120 660 118 657 114 655 110 654 106 652 100 651 96 650 90 649 86 648 80 647 76 646 72 644 67 642 62 640 58 638 54 637 50 636 46 634 40 634 34 636 28 638 25 642 22 646 20 650 20 654 20 658 23 661 26 663 30 665 34 666 38 668 42 670 48 672 52 673 56 675 60 678 64 680 67 682 70 686 74 688 76 691 80 694 83 697 86 M262 46 258 46 252 44 249 42 246 38 246 34 247 30 250 28 256 27 261 28 264 30 268 33 270 37 270 41 268 44 262 46 M106 93 100 93 96 92 92 88 90 85 89 80 90 74 92 70 94 67 97 64 100 62 106 61 110 62 114 66 116 70 117 74 116 80 115 84 112 88 110 90 106 93 M408 206 402 206 398 205 394 203 390 201 386 198 383 196 380 194 376 190 373 188 370 185 366 182 363 180 360 177 356 174 353 172 350 170 346 166 343 164 340 161 336 158 334 155 331 152 328 148 326 144 324 140 323 136 322 132 320 126 319 122 319 116 319 110 319 104 320 99 322 94 324 90 326 87 329 84 332 81 336 79 340 77 344 75 349 74 354 73 360 72 364 72 370 72 374 72 380 73 384 74 389 76 393 78 397 80 400 83 404 86 406 88 409 92 412 96 414 100 416 104 417 108 418 112 420 118 420 122 421 128 421 134 422 140 422 144 423 150 423 156 424 162 424 168 424 172 424 178 424 183 423 188 422 194 420 198 418 201 415 204 410 206 M0 89 2 92 5 96 7 100 9 104 9 110 8 114 5 118 2 120 M132 402 126 403 120 402 117 400 114 397 112 392 111 388 111 382 112 376 113 372 115 368 117 364 118 360 120 356 122 352 124 347 126 342 126 338 126 332 126 328 124 322 122 318 120 314 118 310 116 307 114 304 110 300 108 297 105 294 102 292 98 288 95 286 92 284 88 281 84 279 81 276 78 273 75 270 74 266 74 262 76 256 78 252 80 249 82 245 84 242 87 238 89 234 92 230 94 227 96 224 99 220 102 217 104 214 108 211 112 208 116 207 122 207 128 208 132 210 135 212 138 214 142 217 145 220 148 222 152 225 156 228 159 230 163 232 166 234 171 236 176 238 180 239 184 240 190 241 196 242 200 243 206 244 210 244 216 246 220 247 224 249 228 251 232 253 236 255 239 258 242 260 246 264 248 266 251 270 254 273 256 276 258 280 260 286 261 290 260 296 260 300 258 304 256 308 253 312 250 316 248 318 244 321 241 324 238 326 234 328 230 330 225 332 220 333 215 334 211 334 206 333 202 332 196 330 192 330 188 330 184 332 181 336 180 342 181 348 182 354 183 358 182 364 180 368 178 371 174 374 172 376 168 379 164 382 161 384 158 386 154 389 150 392 147 394 144 396 140 398 136 400 132 402 M471 438 466 436 462 434 458 432 454 430 450 428 446 427 442 425 437 424 432 423 426 422 422 422 416 421 412 420 407 418 402 416 398 414 395 412 392 410 388 407 384 404 381 402 378 400 374 397 370 394 367 392 364 390 360 387 356 384 354 382 350 378 348 376 345 372 342 368 340 364 338 360 337 356 336 350 337 344 338 339 340 335 342 332 346 328 348 326 352 323 356 321 360 319 364 318 370 316 374 316 380 315 386 315 392 315 398 314 402 314 408 313 412 312 418 311 422 310 428 309 434 309 440 310 444 311 448 312 453 314 457 316 461 318 465 320 469 322 474 324 478 326 482 327 486 328 492 330 496 331 502 332 506 333 510 334 516 336 520 337 524 338 529 340 534 342 538 343 543 344 548 345 554 346 560 345 566 344 570 342 574 340 576 338 579 334 581 330 581 324 580 318 579 314 577 310 575 306 572 302 570 298 568 295 566 292 564 288 562 284 560 279 559 274 558 270 557 264 558 258 558 254 560 249 562 244 564 241 566 238 570 235 574 232 578 231 582 230 586 230 592 231 596 233 600 235 604 237 608 240 610 242 614 245 617 248 620 251 623 254 626 257 628 260 632 264 634 266 638 270 640 272 644 275 648 278 651 280 654 282 658 285 661 288 664 291 666 294 668 300 667 306 666 310 664 314 661 318 658 322 656 324 652 328 649 330 646 333 643 336 640 339 637 342 634 346 632 349 630 352 628 356 626 360 624 365 622 370 620 374 619 378 618 382 616 388 615 392 613 396 612 400 610 404 608 408 606 412 603 416 600 420 598 422 594 425 590 428 587 430 583 432 579 434 575 436 570 438 M698 109 696 112 692 116 688 117 684 118 678 118 674 118 669 116 666 114 662 110 660 106 658 102 657 98 656 92 655 88 654 82 654 78 652 72 651 68 650 64 648 58 647 54 646 50 645 44 646 39 649 36 653 36 656 38 659 42 661 46 663 50 664 54 666 58 669 62 671 66 674 69 676 72 680 76 682 78 685 82 688 85 691 88 694 92 696 95 698 100 M408 198 402 199 398 198 393 196 390 194 386 192 382 189 378 186 376 184 372 181 368 178 366 176 362 173 358 170 356 168 352 165 349 162 346 159 343 156 340 153 338 150 335 146 333 142 331 138 329 134 328 130 326 124 326 120 325 114 325 108 326 103 328 98 330 94 332 91 335 88 338 86 342 83 346 82 352 80 356 79 362 79 368 79 374 79 378 80 383 82 387 84 390 86 394 89 397 92 400 96 402 99 404 102 406 106 408 110 410 116 411 120 413 124 414 129 415 134 416 139 417 144 418 150 418 154 419 160 419 166 420 172 419 178 418 184 417 188 415 192 412 196 408 198 M134 390 128 391 124 390 121 386 120 382 120 377 121 372 123 368 125 364 127 360 130 356 132 352 134 348 135 344 136 340 136 334 135 330 134 326 132 322 130 318 127 314 125 310 122 306 120 304 117 300 114 296 112 294 108 290 105 288 102 285 98 282 96 280 92 277 89 274 86 271 84 268 83 262 84 256 85 252 87 248 89 244 92 240 94 236 96 233 98 230 102 226 104 223 108 220 111 218 115 216 120 215 126 216 130 217 134 219 138 222 141 224 144 226 148 229 152 232 155 234 158 236 162 238 166 240 171 242 176 244 180 245 186 246 190 246 196 247 202 248 206 249 212 250 216 251 220 253 224 254 228 256 232 259 236 262 239 264 242 267 245 270 248 274 250 277 252 281 254 286 255 290 254 296 253 300 252 304 249 308 246 312 244 314 240 317 236 319 232 321 228 322 222 323 216 323 212 322 208 320 203 318 198 316 194 315 188 314 182 315 178 316 174 318 170 321 166 324 164 327 162 330 159 334 158 338 157 344 157 350 158 356 157 362 156 366 154 371 152 374 149 378 146 382 144 384 140 387 136 389 M556 436 550 437 544 437 538 437 532 437 526 436 521 436 516 436 510 435 504 435 498 435 492 435 486 435 481 434 476 433 472 431 468 430 464 428 460 426 456 423 452 422 448 420 442 418 438 417 432 416 428 416 422 415 418 414 412 412 408 411 404 409 400 407 396 405 392 402 389 400 386 398 382 396 378 393 374 390 370 388 367 386 364 384 360 381 357 378 354 375 351 372 348 368 346 365 344 361 342 356 342 352 342 347 343 342 345 338 348 334 350 332 354 329 358 327 362 325 366 324 372 323 378 323 384 323 390 323 396 324 402 324 408 324 414 323 418 322 424 321 430 320 434 320 438 320 444 321 448 322 453 324 457 326 462 328 466 329 470 331 476 332 480 333 486 334 490 335 496 336 500 336 506 338 510 339 515 340 520 342 524 343 528 344 533 346 538 348 542 349 547 350 552 351 558 352 564 351 570 350 574 349 578 347 582 345 585 342 588 339 590 336 592 330 592 324 590 318 588 314 586 311 584 308 581 304 578 300 576 297 574 294 571 290 568 286 566 282 565 278 563 274 562 268 562 262 563 256 564 252 566 248 569 244 572 241 576 238 580 237 586 236 592 237 596 239 600 241 604 243 607 246 610 248 614 252 616 254 619 258 622 262 624 265 626 268 629 272 632 276 634 280 636 282 639 286 642 290 644 292 647 296 649 300 649 306 648 310 646 314 643 318 640 321 637 324 634 328 632 331 629 334 627 338 624 342 622 346 621 350 619 354 618 358 616 364 615 368 614 372 612 378 611 382 610 386 608 392 607 396 605 400 603 404 600 408 598 411 596 414 592 418 590 420 586 423 582 425 578 428 574 430 570 432 566 433 562 435 557 436 M680 108 675 108 671 106 668 103 666 99 665 94 664 88 666 82 670 81 674 83 677 86 680 88 683 92 685 96 686 100 686 104 682 108 M402 190 397 190 392 188 388 186 384 184 382 182 378 179 374 176 371 174 368 172 364 168 362 166 358 163 355 160 352 157 349 154 346 150 344 147 342 144 340 140 338 136 336 131 334 126 333 122 333 116 333 110 334 104 336 100 338 96 340 94 344 91 348 89 352 87 358 86 362 86 367 86 372 87 376 88 381 90 384 92 388 95 391 98 394 102 396 105 398 109 400 112 402 117 404 121 406 126 407 130 409 134 410 139 411 144 412 148 413 154 414 160 414 164 414 170 414 174 413 180 411 184 408 188 404 190 M152 316 146 317 142 316 138 313 134 310 132 308 129 304 126 301 123 298 120 295 118 292 114 288 112 286 108 283 105 280 102 277 99 274 96 271 94 268 92 264 91 258 92 254 94 249 96 245 98 241 100 238 103 234 106 231 109 228 112 226 117 224 122 223 126 224 132 226 135 228 139 230 142 232 146 235 150 238 153 240 157 242 160 244 164 246 168 248 174 250 178 251 184 252 188 252 194 253 200 253 204 254 210 255 214 256 219 258 223 260 227 262 230 264 234 267 237 270 240 273 242 276 245 280 247 284 248 290 247 296 246 300 244 304 240 308 238 310 234 312 228 314 224 314 220 314 214 313 210 311 206 310 202 308 196 306 192 305 186 304 180 304 174 306 170 307 166 309 162 311 158 314 154 315 M610 314 606 313 602 311 598 308 595 306 592 304 588 300 586 298 582 294 580 292 576 288 574 285 572 281 570 277 568 272 568 268 568 262 568 258 570 254 572 250 576 246 580 244 584 243 590 243 594 244 598 246 602 249 606 252 608 254 611 258 614 262 616 265 618 269 620 273 622 278 623 282 624 288 624 292 624 296 623 302 621 306 618 310 616 312 612 314 M548 432 542 432 536 432 530 432 526 432 520 431 514 431 508 431 502 430 496 430 492 430 486 429 482 428 476 426 472 424 468 422 464 420 460 418 457 416 452 414 448 412 444 411 440 410 434 409 428 408 424 407 418 406 414 405 410 404 406 402 402 400 398 397 394 395 390 392 386 390 383 388 379 386 376 384 372 382 368 379 364 377 361 374 358 372 355 368 352 364 350 360 349 356 348 350 350 344 352 340 354 338 358 334 362 332 366 331 372 330 378 330 384 331 388 332 394 333 398 334 404 336 408 336 414 336 419 336 424 335 430 335 436 334 442 335 448 336 452 336 458 338 462 338 468 339 474 339 480 340 486 340 490 340 496 341 502 342 506 342 512 344 516 345 520 346 525 348 530 350 534 351 538 352 543 354 548 356 552 357 558 358 562 358 568 358 572 358 578 357 582 356 588 354 592 353 598 352 603 354 605 358 606 364 606 370 605 376 604 381 603 386 602 390 600 394 598 398 596 402 593 406 590 410 588 412 584 416 581 418 578 420 574 423 570 425 566 427 562 429 558 430 552 431 548 432 M400 180 394 181 390 179 386 177 382 175 378 172 375 170 372 167 368 164 366 162 362 158 360 156 356 152 354 149 352 146 350 142 348 138 346 134 344 129 343 124 342 120 342 114 342 110 344 105 346 102 350 99 354 96 358 95 364 95 370 96 374 97 378 99 382 102 384 104 387 108 390 112 392 115 394 118 396 122 398 126 400 131 402 136 403 140 405 144 406 149 407 154 408 160 408 164 408 168 406 174 404 178 401 180 M228 304 222 305 217 304 212 302 208 301 204 299 200 298 195 296 190 295 186 294 180 294 176 294 170 296 166 297 162 299 158 300 153 302 148 303 142 302 138 300 135 298 132 296 128 292 125 290 122 287 119 284 116 281 113 278 110 275 107 272 104 268 102 264 101 260 101 254 102 250 104 246 106 242 110 238 112 236 116 234 122 232 128 233 132 235 136 237 140 239 144 242 147 244 150 246 154 249 158 251 162 254 166 255 170 257 174 258 180 259 186 260 192 260 196 260 202 261 208 262 212 263 216 264 221 266 224 268 228 271 232 274 234 277 236 280 238 284 240 290 238 296 236 300 233 302 229 304 M604 292 598 293 594 292 590 290 586 287 582 284 580 281 578 278 576 274 575 268 575 262 576 258 579 254 582 252 588 251 593 252 597 254 600 256 604 260 606 263 608 266 610 272 611 276 611 282 610 286 607 290 604 292 M550 426 544 427 538 427 532 427 526 427 520 426 516 426 510 426 504 425 498 425 494 424 488 423 484 422 479 420 475 418 471 416 468 414 464 412 460 409 456 407 452 405 448 403 444 402 438 400 434 400 428 399 424 398 418 396 414 395 410 393 406 391 402 388 399 386 396 384 392 382 388 380 383 378 379 376 374 374 371 372 367 370 364 367 361 364 358 360 357 356 357 350 359 346 362 342 366 340 370 339 376 339 380 340 386 342 390 344 394 346 398 348 402 350 406 351 410 352 416 353 422 353 428 353 434 352 438 352 444 351 450 351 456 350 460 349 466 348 470 348 476 347 482 346 486 346 492 346 496 346 502 347 508 348 512 349 517 350 522 352 526 353 530 354 534 356 539 358 544 360 548 361 552 362 558 364 562 365 568 365 574 366 578 366 584 367 588 368 592 372 594 376 594 380 594 384 593 390 591 394 589 398 587 402 584 406 582 408 578 412 575 414 572 417 568 419 564 421 560 423 556 425 551 426 M394 168 388 168 384 166 380 164 377 162 374 159 370 156 368 153 365 150 362 146 360 142 358 138 357 134 355 130 354 124 354 118 356 114 359 110 364 108 370 109 374 111 378 114 380 116 384 120 386 123 388 126 390 130 392 134 394 138 396 143 398 148 398 152 399 158 398 164 396 167 M146 288 142 287 138 286 134 284 130 281 126 278 124 276 120 272 118 269 116 266 114 262 113 256 114 251 116 248 120 245 126 244 132 246 136 248 139 250 142 252 146 255 150 258 152 260 156 263 159 266 162 268 165 272 167 276 164 280 162 282 158 284 154 286 148 288 M592 272 589 270 592 268 593 272 M222 290 216 291 212 290 207 288 203 286 200 284 196 281 193 278 195 274 200 272 204 272 208 272 214 274 218 276 220 278 224 282 225 286 222 290 M548 420 542 421 536 422 530 421 524 421 518 421 512 420 508 420 502 419 496 418 492 417 488 416 483 414 479 412 476 410 472 407 468 404 465 402 462 399 458 396 456 394 452 391 449 388 446 386 443 382 442 378 444 375 447 372 450 370 454 367 458 364 461 362 465 360 469 358 474 356 478 355 482 353 488 352 492 352 498 352 503 352 508 353 514 354 518 355 522 357 526 358 531 360 535 362 540 364 544 366 548 367 552 369 556 370 561 372 566 374 570 375 574 377 578 380 580 383 581 388 580 394 578 398 576 402 574 404 570 408 568 410 564 413 560 416 556 418 552 419 548 420 M540 414 534 415 528 415 522 415 516 414 512 414 506 413 501 412 496 411 492 409 488 408 484 405 480 403 477 400 474 397 472 394 469 390 468 386 467 380 468 376 470 372 474 368 476 366 480 363 484 361 488 360 494 358 498 358 504 358 508 358 514 360 518 361 522 362 526 364 531 366 535 368 539 370 542 372 546 374 550 376 554 378 558 381 562 384 564 387 566 392 565 398 562 402 560 405 556 408 553 410 549 412 544 413 540 414 M532 406 526 407 520 407 514 406 510 406 504 404 500 403 496 402 492 399 488 396 486 394 483 390 482 386 481 380 483 376 486 372 488 370 492 367 496 366 502 365 508 365 512 366 518 368 522 369 526 371 530 374 534 376 537 378 540 380 544 384 546 386 548 390 549 396 546 400 544 402 540 404 534 406"/></svg><!--/CONTOUR-->
  <!-- region 1 -->
  <div class="dot" style="left:-3px;top:110px;width:661px;height:83px"></div>
  <div class="wl" style="left:-2px;top:111px;width:659px;height:81px"></div>
  <div class="a" style="left:-2px;top:122px;width:659px;height:59px;background:#f3f2f2;box-shadow:0 1px 2px rgba(0,0,0,.12)"></div>
  <div class="a" style="left:341px;top:139px;width:301px;height:28px;border:1px solid #dddbda;border-radius:4px;background:#fff"></div>
  <div class="a" style="left:440px;top:139px;width:1px;height:28px;background:#dddbda"></div>
  <div class="a" style="left:490px;top:139px;width:1px;height:28px;background:#dddbda"></div>
  <div class="a" style="left:613px;top:139px;width:1px;height:28px;background:#dddbda"></div>
  <svg class="a" style="left:623px;top:150px" width="12" height="9" viewBox="0 0 12 9"><path d="M0.5 1.2h11L6 8z" fill="#706e6b"/></svg>
  <!-- left column -->
  <div class="dot" style="left:-3px;top:204px;width:245px;height:400px"></div>
  <div class="wl" style="left:-2px;top:205px;width:243px;height:400px"></div>
  <div class="a" style="left:-2px;top:215px;width:242px;height:320px;background:#fff"></div>
  <div class="a" style="left:0;top:257px;width:226px;height:1px;background:#dddbda"></div>
  <div class="dot" style="left:-3px;top:272px;width:229px;height:300px;border-color:rgba(40,60,110,.42)"></div>
  <div class="a" style="left:-4px;top:285px;width:227px;height:28px;background:#f3f2f2;border-radius:4px"></div>
  <div class="a" style="left:0;top:363px;width:215px;height:1px;background:#e5e5e5"></div>
  <div class="a" style="left:0;top:406px;width:215px;height:1px;background:#e5e5e5"></div>
  <div class="a" style="left:0;top:449px;width:215px;height:1px;background:#e5e5e5"></div>
  <div class="a" style="left:0;top:492px;width:215px;height:1px;background:#e5e5e5"></div>
  <svg class="a" style="left:200px;top:344px" width="14" height="14" viewBox="0 0 14 14"><path d="M1.5 12.5l1-3.3 6.6-6.6 2.3 2.3-6.6 6.6z" fill="#e9e9e9"/><path d="M9.9 1.8l1-1 2.3 2.3-1 1z" fill="#e9e9e9"/></svg>
  <svg class="a" style="left:200px;top:387px" width="14" height="14" viewBox="0 0 14 14"><path d="M1.5 12.5l1-3.3 6.6-6.6 2.3 2.3-6.6 6.6z" fill="#e9e9e9"/><path d="M9.9 1.8l1-1 2.3 2.3-1 1z" fill="#e9e9e9"/></svg>
  <svg class="a" style="left:200px;top:430px" width="14" height="14" viewBox="0 0 14 14"><path d="M1.5 12.5l1-3.3 6.6-6.6 2.3 2.3-6.6 6.6z" fill="#e9e9e9"/><path d="M9.9 1.8l1-1 2.3 2.3-1 1z" fill="#e9e9e9"/></svg>
  <svg class="a" style="left:200px;top:473px" width="14" height="14" viewBox="0 0 14 14"><path d="M1.5 12.5l1-3.3 6.6-6.6 2.3 2.3-6.6 6.6z" fill="#e9e9e9"/><path d="M9.9 1.8l1-1 2.3 2.3-1 1z" fill="#e9e9e9"/></svg>
  <svg class="a" style="left:200px;top:516px" width="14" height="14" viewBox="0 0 14 14"><path d="M1.5 12.5l1-3.3 6.6-6.6 2.3 2.3-6.6 6.6z" fill="#e9e9e9"/><path d="M9.9 1.8l1-1 2.3 2.3-1 1z" fill="#e9e9e9"/></svg>
  
  <!-- right column -->
  <div class="dot" style="left:253px;top:204px;width:405px;height:319px"></div>
  <div class="wl" style="left:254px;top:205px;width:403px;height:317px"></div>
  <div class="a" style="left:254px;top:215px;width:403px;height:2px;background:rgba(255,255,255,.85)"></div>
  <div class="a" style="left:255px;top:217px;width:400px;height:292px;border:2px solid #006db8;background:#fff"></div>
  <div class="a" style="left:257px;top:459px;width:396px;height:1px;background:#dddbda"></div>
  <div class="a" style="left:255px;top:509px;width:401px;height:1px;background:rgba(255,255,255,.9)"></div>
  <div class="a" style="left:254px;top:510px;width:402px;height:2px;background:linear-gradient(rgba(20,50,100,.12),rgba(20,50,100,0))"></div>
  <div class="a" style="left:611px;top:217px;width:44px;height:24px;background:#006db8"></div>
  <svg class="a" style="left:615px;top:221px" width="14" height="14" viewBox="0 0 14 14"><path d="M6.6 2.6V10.6M2.6 6.6H10.6" stroke="#fff" stroke-width="1.2"/><path d="M6.6 1L4.3 3.5H8.9zM6.6 12.2L4.3 9.7H8.9zM1 6.6L3.5 4.3V8.9zM12.2 6.6L9.7 4.3V8.9z" fill="#fff"/></svg>
  <svg class="a" style="left:637px;top:221px" width="12" height="14" viewBox="0 0 12 14"><path d="M3.2 3V1.9a.9.9 0 0 1 .9-.9h2.4a.9.9 0 0 1 .9.9V3" stroke="#fff" stroke-width="1.1" fill="none"/><rect x="0.7" y="2.8" width="10.3" height="1.5" fill="#fff"/><path d="M1.9 5h8.2v6.8a.9.9 0 0 1-.9.9H2.8a.9.9 0 0 1-.9-.9z" fill="#fff"/><rect x="4.1" y="6.8" width="0.9" height="4.3" fill="#3a8ad0"/><rect x="7.1" y="6.8" width="0.9" height="4.3" fill="#3a8ad0"/></svg>
  <svg class="a" style="left:449px;top:212px" width="12" height="12" viewBox="0 0 12 12"><circle cx="6" cy="6" r="5.5" fill="#006db8"/><path d="M6 3v6M3 6h6" stroke="#fff" stroke-width="1.1"/></svg>
  <svg class="a" style="left:449px;top:502px" width="12" height="12" viewBox="0 0 12 12"><circle cx="6" cy="6" r="5.5" fill="#006db8"/><path d="M6 3v6M3 6h6" stroke="#fff" stroke-width="1.1"/></svg>
  <div class="a" style="left:356px;top:284px;width:63px;height:29px;border:1px solid #dddbda;border-radius:4px;background:#fff"></div>
  <div class="a" style="left:423px;top:284px;width:90px;height:29px;border:1px solid #dddbda;border-radius:4px;background:#fff"></div>
  <svg class="a" style="left:494px;top:295px" width="10" height="8" viewBox="0 0 10 8"><path d="M0.5 1h9L5 7z" fill="#706e6b"/></svg>
  <div class="a" style="left:283px;top:362px;width:15px;height:15px;border:1px solid #dddbda;border-radius:50%;background:#fff"></div>
  <div class="a" style="left:325px;top:356px;width:182px;height:28px;border:1px solid #d4d2d0;border-radius:4px;background:#ecebea"></div>
  <svg class="a" style="left:484px;top:365px" width="13" height="13" viewBox="0 0 13 13"><path d="M1 3h11v9.5H1z" fill="#dcdbda"/><path d="M1.5 6h10M4.5 6v6.5M8.5 6v6.5M1.5 9.2h10" stroke="#ecebea" stroke-width="0.9"/><path d="M3.5 0.8v2.5M9.5 0.8v2.5" stroke="#dcdbda" stroke-width="1.3"/></svg>
  <div class="a" style="left:283px;top:398px;width:15px;height:15px;border:1px solid #dddbda;border-radius:50%;background:#fff"></div>
  <div class="a" style="left:287px;top:402px;width:7px;height:7px;border-radius:50%;background:#1b5297"></div>
  <div class="a" style="left:335px;top:391px;width:62px;height:29px;border:1px solid #dddbda;border-radius:4px;background:#fff"></div>
  <div class="a" style="left:428px;top:471px;width:55px;height:28px;border:1px solid #dddbda;border-radius:4px;background:#fff"></div>
  <!-- bottom of right region -->
</div>

<!-- right panel -->
<div class="a" style="left:704px;top:152px;width:294px;height:1px;background:#dddbda"></div>
<svg class="a" style="left:705px;top:174px" width="14" height="10" viewBox="0 0 14 10"><path d="M1.5 2.2l5.5 5.5 5.5-5.5" stroke="#16325c" stroke-width="1.7" fill="none"/></svg>
<div class="a" style="left:712px;top:229px;width:114px;height:34px;border:1px solid #dddbda;border-radius:4px;background:#fff"></div>
<svg class="a" style="left:729px;top:240px" width="14" height="14" viewBox="0 0 14 14"><path d="M7 1v12M1 7h12" stroke="#0070d2" stroke-width="1.75" fill="none"/></svg>
<div id="t_title" class="t" style="left:47.80px;top:6.52px;font-size:14.14px;font-weight:700;color:#fff;transform:scaleX(0.8971)">Reservation Record Page</div>
<div id="t_back" class="t" style="left:886.00px;top:8.64px;font-size:12.57px;font-weight:400;color:#fff;transform:scaleX(1.0319)">Back</div>
<div id="t_help" class="t" style="left:968.00px;top:8.84px;font-size:12.86px;font-weight:400;color:#fff;transform:scaleX(1.1046)">Help</div>
<div id="t_save1" class="t" style="left:831.92px;top:60.72px;font-size:13.29px;font-weight:400;color:#fff;transform:scaleX(0.9187)">Save</div>
<div id="t_act" class="t" style="left:910.36px;top:60.72px;font-size:13.29px;font-weight:400;color:#fff;transform:scaleX(1.0192)">Activation...</div>
<div id="t_nc" class="t g" style="left:355.56px;top:144.64px;font-size:13.57px;font-weight:400;color:#3470b8;transform:scaleX(0.9049)">New Contact</div>
<div id="t_edit" class="t g" style="left:454.00px;top:144.64px;font-size:13.57px;font-weight:400;color:#3470b8;transform:scaleX(0.8930)">Edit</div>
<div id="t_no" class="t g" style="left:504.88px;top:144.64px;font-size:13.57px;font-weight:400;color:#3470b8;transform:scaleX(0.9252)">New Opportunity</div>
<div id="t_rr" class="t g" style="left:268.00px;top:227.50px;font-size:14.29px;font-weight:400;color:#4a4846;transform:scaleX(1.0259)">Recurring reservation</div>
<div id="t_re" class="t g" style="left:282.44px;top:292.42px;font-size:12.57px;font-weight:400;color:#4a4846;transform:scaleX(0.9165)">Repeat Every</div>
<div id="t_2" class="t g" style="left:368.80px;top:291.58px;font-size:12.57px;font-weight:400;color:#4a4846;transform:scaleX(0.9820)">2</div>
<div id="t_days" class="t g" style="left:434.12px;top:291.58px;font-size:12.57px;font-weight:400;color:#4a4846;transform:scaleX(0.8856)">Days</div>
<div id="t_ec" class="t g" style="left:282.92px;top:340.02px;font-size:11.57px;font-weight:700;color:#575553;transform:scaleX(0.9207)">End Condition</div>
<div id="t_on" class="t g" style="left:304.92px;top:363.24px;font-size:12.29px;font-weight:400;color:#4a4846;transform:scaleX(0.9789)">On</div>
<div id="t_date" class="t g" style="left:336.44px;top:362.44px;font-size:12.86px;font-weight:400;color:#4a4846;transform:scaleX(0.9410)">1 Jan 1970</div>
<div id="t_after" class="t g" style="left:304.92px;top:398.56px;font-size:12.14px;font-weight:400;color:#4a4846;transform:scaleX(0.9864)">After</div>
<div id="t_6" class="t g" style="left:346.92px;top:398.56px;font-size:11.71px;font-weight:400;color:#4a4846;transform:scaleX(1.1133)">6</div>
<div id="t_occ" class="t g" style="left:401.92px;top:398.88px;font-size:12.14px;font-weight:400;color:#4a4846;transform:scaleX(0.9650)">occurrences</div>
<div id="t_save2" class="t g" style="left:441.92px;top:477.44px;font-size:13.14px;font-weight:400;color:#3470b8;transform:scaleX(0.8178)">Save</div>
<div id="t_page" class="t" style="left:703.56px;top:115.88px;font-size:12.71px;font-weight:400;color:#006dcc;transform:scaleX(0.9583)">Page</div>
<div id="t_gt" class="t" style="left:742.24px;top:116.24px;font-size:12.71px;font-weight:400;color:#3e3e3c;transform:scaleX(0.7000)">&gt;</div>
<div id="t_rr2" class="t" style="left:756.00px;top:115.88px;font-size:12.57px;font-weight:400;color:#3e3e3c;transform:scaleX(1.0518)">Recurring Reservation</div>
<div id="t_scv" class="t" style="left:727.92px;top:172.40px;font-size:13.14px;font-weight:700;color:#1f3b64;transform:scaleX(0.9853)">Set Component Visibility</div>
<div id="t_filters" class="t" style="left:711.00px;top:209.54px;font-size:13.00px;font-weight:400;color:#54524f;transform:scaleX(1.0178)">Filters</div>
<div id="t_addf" class="t" style="left:751.80px;top:239.74px;font-size:12.57px;font-weight:400;color:#0070d2;transform:scaleX(1.0712)">Add Filter</div>
</body></html>
